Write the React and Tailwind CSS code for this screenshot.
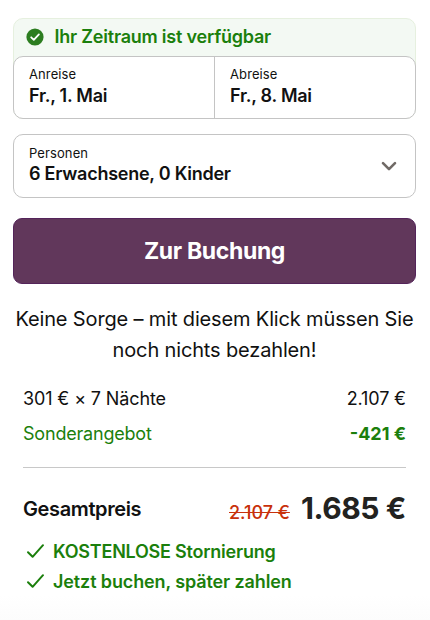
function Field({ label, value, className = '' }) {
  return (
    <div className={`flex flex-col pl-[15px] ${className}`}>
      <span className="text-[13px] leading-[18px] tracking-[0.1px]">{label}</span>
      <span className="text-[18px] font-semibold leading-[23px] tracking-[-0.25px]">{value}</span>
    </div>
  );
}

function Benefit({ children, className = '' }) {
  return (
    <li className={`flex h-[30px] items-center ${className}`}>
      <svg className="mr-[8px] h-5 w-5 shrink-0" viewBox="0 0 20 20" fill="none" stroke="#1b7f0c" strokeWidth="2" strokeLinecap="round" strokeLinejoin="round">
        <path d="M3 11.2L7.6 15.8L18 4.2" />
      </svg>
      <span>{children}</span>
    </li>
  );
}

export default function App() {
  return (
    <main className="flex h-[620px] w-[430px] flex-col overflow-hidden bg-white bg-[linear-gradient(#fff_595px,#fcfcfc_620px)] pl-[13px] pr-[14px] pt-[18px] font-['Inter',sans-serif] text-[#111]">
      <section className="h-[101px] shrink-0 rounded-[10px] border border-[#e6f0df] bg-[#f3f9f3]">
        <div className="flex h-[37px] items-center pl-[11.5px] pb-[2px] text-[18px] font-semibold tracking-[-0.22px] text-[#1b7f0c]">
          <svg className="mr-[11px] h-[18px] w-[18px] shrink-0" viewBox="0 0 18 18">
            <circle cx="9" cy="9" r="8.6" fill="#2c7d20" />
            <path d="M5.2 9.3L7.8 11.8L12.9 6.4" fill="none" stroke="#fff" strokeWidth="1.8" strokeLinecap="round" strokeLinejoin="round" />
          </svg>
          <span>Ihr Zeitraum ist verfügbar</span>
        </div>
        <div className="-mx-px flex h-[63px] rounded-[10px] border border-[#c4c4c4] bg-white">
          <Field label="Anreise" value="Fr., 1. Mai" className="w-[200px] gap-px pt-2" />
          <Field label="Abreise" value="Fr., 8. Mai" className="flex-1 gap-px border-l border-[#c4c4c4] pt-2" />
        </div>
      </section>
      <button className="mt-[15px] flex h-[64px] shrink-0 items-center rounded-[10px] border border-[#c4c4c4] bg-white text-left">
        <Field label="Personen" value="6 Erwachsene, 0 Kinder" className="flex-1 self-start pt-[8.5px]" />
        <svg className="mr-[18px] h-4 w-4" viewBox="0 0 16 16" fill="none" stroke="#706a66" strokeWidth="2.6" strokeLinecap="round" strokeLinejoin="round">
          <path d="M2 5.2L8 11.2L14 5.2" />
        </svg>
      </button>
      <button className="mt-5 h-[66px] shrink-0 rounded-[9px] border border-[#54245a] bg-[#61375b] text-[23px] font-bold leading-[64px] tracking-[-0.35px] text-white">
        Zur Buchung
      </button>
      <p className="mt-5 text-center text-[20px] leading-[30.5px] tracking-[-0.15px] whitespace-nowrap">
        Keine Sorge – mit diesem Klick müssen Sie
        <br />
        noch nichts bezahlen!
      </p>
      <section className="mx-[10px] text-[18px]">
        <div className="mt-[15px] flex h-9 items-center justify-between tracking-[-0.13px]">
          <span>301 € × 7 Nächte</span>
          <span>2.107 €</span>
        </div>
        <div className="flex h-9 items-center justify-between pb-[2px] text-[#1b7f0c]">
          <span className="tracking-[-0.2px]">Sonderangebot</span>
          <span className="font-bold">-421 €</span>
        </div>
        <hr className="mt-[15px] border-[#c8c8c8]" />
        <div className="mt-[22px] flex h-10">
          <span className="text-[20px] font-semibold leading-[38px] tracking-[-0.38px]">Gesamtpreis</span>
          <div className="ml-auto flex items-baseline">
            <s className="mr-[11px] text-[18px] font-medium text-[#c8310b]">2.107 €</s>
            <strong className="text-[30px] font-bold leading-9 tracking-[-0.4px] text-[#222220]">1.685 €</strong>
          </div>
        </div>
        <ul className="mt-[6px] pl-[2px] font-semibold text-[#1b7f0c]">
          <Benefit className="tracking-[-0.23px]">KOSTENLOSE Stornierung</Benefit>
          <Benefit className="tracking-[-0.12px]">Jetzt buchen, später zahlen</Benefit>
        </ul>
      </section>
    </main>
  );
}
